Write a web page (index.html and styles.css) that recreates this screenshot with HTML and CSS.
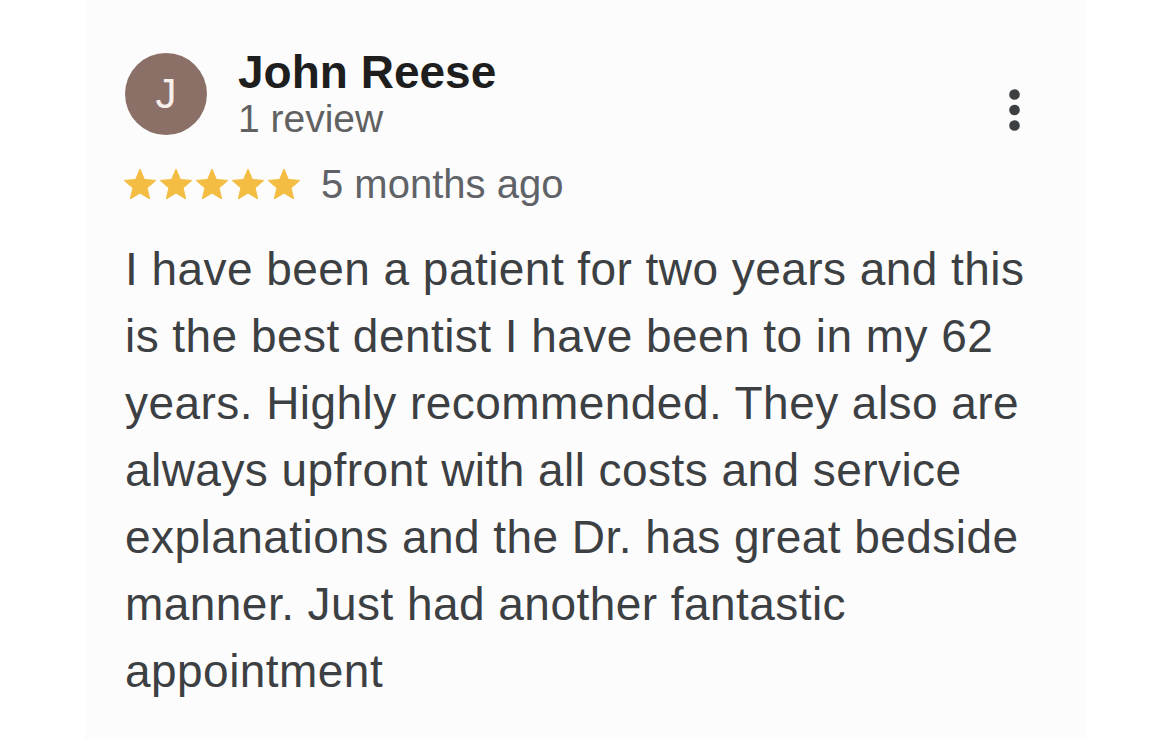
FILE: index.html
```html
<!DOCTYPE html>
<html lang="en">
<head>
<meta charset="utf-8">
<title>Review</title>
<link rel="stylesheet" href="styles.css">
</head>
<body>
<div class="page">
  <article class="card">
    <header class="head">
      <div class="avatar">J</div>
      <div class="who">
        <div class="name">John Reese</div>
        <div class="count">1 review</div>
      </div>
      <svg class="kebab" width="11" height="43" viewBox="0 0 11 43">
        <circle cx="5.5" cy="5.5" r="5.3" fill="#3c4043"/>
        <circle cx="5.5" cy="21" r="5.3" fill="#3c4043"/>
        <circle cx="5.5" cy="36.5" r="5.3" fill="#3c4043"/>
      </svg>
    </header>
    <div class="rating">
      <div class="stars">
        <svg class="star" viewBox="2 2 20 19"><path d="M12 17.27L18.18 21l-1.64-7.03L22 9.24l-7.19-.61L12 2 9.19 8.63 2 9.24l5.46 4.73L5.82 21z"/></svg>
        <svg class="star" viewBox="2 2 20 19"><path d="M12 17.27L18.18 21l-1.64-7.03L22 9.24l-7.19-.61L12 2 9.19 8.63 2 9.24l5.46 4.73L5.82 21z"/></svg>
        <svg class="star" viewBox="2 2 20 19"><path d="M12 17.27L18.18 21l-1.64-7.03L22 9.24l-7.19-.61L12 2 9.19 8.63 2 9.24l5.46 4.73L5.82 21z"/></svg>
        <svg class="star" viewBox="2 2 20 19"><path d="M12 17.27L18.18 21l-1.64-7.03L22 9.24l-7.19-.61L12 2 9.19 8.63 2 9.24l5.46 4.73L5.82 21z"/></svg>
        <svg class="star" viewBox="2 2 20 19"><path d="M12 17.27L18.18 21l-1.64-7.03L22 9.24l-7.19-.61L12 2 9.19 8.63 2 9.24l5.46 4.73L5.82 21z"/></svg>
      </div>
      <span class="date">5 months ago</span>
    </div>
    <p class="text">I have been a patient for two years and this is the best dentist I have been to in my 62 years. Highly recommended. They also are always upfront with all costs and service explanations and the Dr. has great bedside manner. Just had another fantastic appointment</p>
  </article>
</div>
</body>
</html>
```

FILE: styles.css
```css
html, body {
  margin: 0;
  padding: 0;
  background: #ffffff;
}

.page {
  width: 1170px;
  height: 739px;
  overflow: hidden;
  font-family: "Liberation Sans", Arial, sans-serif;
}

.card {
  margin-left: 85px;
  width: 1002px;
  height: 739px;
  box-sizing: border-box;
  background: #fcfcfc;
  padding: 49px 32px 0 40px;
}

.head {
  display: flex;
  align-items: flex-start;
}

.avatar {
  width: 82px;
  height: 82px;
  margin-top: 4px;
  border-radius: 50%;
  background: #8b7068;
  color: #f6efeb;
  font-size: 42px;
  line-height: 82px;
  text-align: center;
  flex: none;
}

.who {
  margin-left: 31px;
}

.name {
  font-size: 46px;
  line-height: 46px;
  font-weight: 700;
  color: #1e1e1e;
}

.count {
  font-size: 39px;
  line-height: 48px;
  color: #616161;
}

.kebab {
  margin-left: auto;
  margin-right: 35px;
  margin-top: 40px;
  flex: none;
}

.rating {
  display: flex;
  align-items: center;
  margin-top: 17px;
  height: 48px;
}

.stars {
  display: flex;
  gap: 4px;
  margin-left: -1px;
}

.star {
  width: 32px;
  height: 30px;
  fill: #f2bd42;
  stroke: #f2bd42;
  stroke-width: 0.6;
  stroke-linejoin: round;
}

.date {
  margin-left: 21px;
  font-size: 40px;
  line-height: 48px;
  color: #5f6368;
}

.text {
  margin: 28px 0 0 0;
  font-size: 46px;
  line-height: 67px;
  letter-spacing: 0.45px;
  color: #3c4043;
}
```
